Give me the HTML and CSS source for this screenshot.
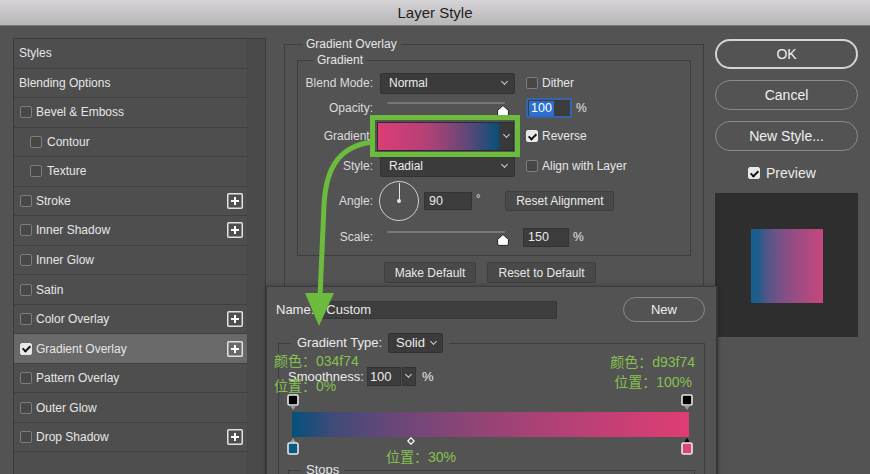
FILE: index.html
```html
<!DOCTYPE html>
<html>
<head>
<meta charset="utf-8">
<link rel="stylesheet" href="styles.css">
</head>
<body>
<div class="window">
  <header class="titlebar">Layer Style</header>
  <div class="main">
    <aside class="styles-list">
      <ul class="rows">
        <li class="row">Styles</li>
        <li class="row">Blending Options</li>
        <li class="row"><span class="cb"></span>Bevel &amp; Emboss</li>
        <li class="row sub"><span class="cb"></span>Contour</li>
        <li class="row sub"><span class="cb"></span>Texture</li>
        <li class="row"><span class="cb"></span>Stroke<svg class="plus" width="16" height="16" viewBox="0 0 16 16"><rect x="0.75" y="0.75" width="14.5" height="14.5" rx="1" fill="none" stroke="#e2e2e2" stroke-width="1.5"/><path d="M8 4v8M4 8h8" stroke="#fff" stroke-width="2"/></svg></li>
        <li class="row"><span class="cb"></span>Inner Shadow<svg class="plus" width="16" height="16" viewBox="0 0 16 16"><rect x="0.75" y="0.75" width="14.5" height="14.5" rx="1" fill="none" stroke="#e2e2e2" stroke-width="1.5"/><path d="M8 4v8M4 8h8" stroke="#fff" stroke-width="2"/></svg></li>
        <li class="row"><span class="cb"></span>Inner Glow</li>
        <li class="row"><span class="cb"></span>Satin</li>
        <li class="row"><span class="cb"></span>Color Overlay<svg class="plus" width="16" height="16" viewBox="0 0 16 16"><rect x="0.75" y="0.75" width="14.5" height="14.5" rx="1" fill="none" stroke="#e2e2e2" stroke-width="1.5"/><path d="M8 4v8M4 8h8" stroke="#fff" stroke-width="2"/></svg></li>
        <li class="row selected"><span class="cb on"></span>Gradient Overlay<svg class="plus" width="16" height="16" viewBox="0 0 16 16"><rect x="0.75" y="0.75" width="14.5" height="14.5" rx="1" fill="none" stroke="#e2e2e2" stroke-width="1.5"/><path d="M8 4v8M4 8h8" stroke="#fff" stroke-width="2"/></svg></li>
        <li class="row"><span class="cb"></span>Pattern Overlay</li>
        <li class="row"><span class="cb"></span>Outer Glow</li>
        <li class="row"><span class="cb"></span>Drop Shadow<svg class="plus" width="16" height="16" viewBox="0 0 16 16"><rect x="0.75" y="0.75" width="14.5" height="14.5" rx="1" fill="none" stroke="#e2e2e2" stroke-width="1.5"/><path d="M8 4v8M4 8h8" stroke="#fff" stroke-width="2"/></svg></li>
      </ul>
      <div class="strip"></div>
    </aside>

    <section class="settings">
      <fieldset class="group outer">
        <legend>Gradient Overlay</legend>
        <fieldset class="group inner">
          <legend>Gradient</legend>
          <div class="form">
            <div class="lbl">Blend Mode:</div>
            <div class="ctl"><div class="select"><span>Normal</span><i class="chev"></i></div><span class="cb gap"></span><span class="cbtext">Dither</span></div>

            <div class="lbl">Opacity:</div>
            <div class="ctl"><div class="slider"><div class="track"></div><svg class="thumb" width="12" height="12" viewBox="0 0 12 12"><path d="M6 0.6 L11.4 5.4 V10 Q11.4 11.4 10 11.4 H2 Q0.6 11.4 0.6 10 V5.4 Z" fill="#fff" stroke="#222" stroke-width="1"/></svg></div><div class="num focus"><span class="sel">100</span></div><span class="unit">%</span></div>

            <div class="lbl">Gradient:</div>
            <div class="ctl"><div class="grad-ctl"><div class="grad-fill"></div><div class="grad-drop"><i class="chev"></i></div></div><span class="cb on gap2"></span><span class="cbtext">Reverse</span></div>

            <div class="lbl">Style:</div>
            <div class="ctl"><div class="select"><span>Radial</span><i class="chev"></i></div><span class="cb gap"></span><span class="cbtext">Align with Layer</span></div>

            <div class="lbl">Angle:</div>
            <div class="ctl"><div class="dial"></div><div class="num angle">90</div><span class="deg">°</span><div class="btn reset-align">Reset Alignment</div></div>

            <div class="lbl">Scale:</div>
            <div class="ctl"><div class="slider"><div class="track"></div><svg class="thumb" width="12" height="12" viewBox="0 0 12 12"><path d="M6 0.6 L11.4 5.4 V10 Q11.4 11.4 10 11.4 H2 Q0.6 11.4 0.6 10 V5.4 Z" fill="#fff" stroke="#222" stroke-width="1"/></svg></div><div class="num scale">150</div><span class="unit">%</span></div>
          </div>
        </fieldset>
        <div class="defaults">
          <div class="btn make-default">Make Default</div>
          <div class="btn reset-default">Reset to Default</div>
        </div>
      </fieldset>
    </section>

    <aside class="actions">
      <div class="pill default">OK</div>
      <div class="pill">Cancel</div>
      <div class="pill">New Style...</div>
      <div class="preview-check"><span class="cb on"></span><span class="ptext">Preview</span></div>
      <div class="preview"><div class="swatch"></div></div>
    </aside>
  </div>

  <div class="editor">
    <div class="name-row">
      <span class="name-lbl">Name:</span>
      <div class="name-input">Custom</div>
      <div class="pill new">New</div>
    </div>
    <fieldset class="group gtype">
      <legend><span class="legend-inner">Gradient Type:<span class="select small"><span>Solid</span><i class="chev"></i></span></span></legend>
      <div class="smooth-row">
        <span>Smoothness:</span>
        <div class="sm-input">100</div>
        <div class="sm-drop"><i class="chev"></i></div>
        <span class="sm-unit">%</span>
      </div>
      <div class="ramp">
        <svg class="stop op-left" width="12" height="17" viewBox="0 0 12 17"><rect x="1" y="1" width="10" height="10" rx="1.5" fill="#000" stroke="#e8e8e8" stroke-width="1.6"/><path d="M3 11.5 H9 L6 16 Z" fill="#9a9a9a"/></svg>
        <svg class="stop op-right" width="12" height="17" viewBox="0 0 12 17"><rect x="1" y="1" width="10" height="10" rx="1.5" fill="#000" stroke="#e8e8e8" stroke-width="1.6"/><path d="M3 11.5 H9 L6 16 Z" fill="#9a9a9a"/></svg>
        <div class="bar"></div>
        <svg class="stop c-left" width="12" height="18" viewBox="0 0 12 18"><path d="M6 1 L9 5.5 H3 Z" fill="#9a9a9a"/><rect x="1" y="6" width="10" height="11" rx="1.5" fill="#0b5a86" stroke="#e8e8e8" stroke-width="1.6"/></svg>
        <svg class="stop c-right" width="12" height="18" viewBox="0 0 12 18"><path d="M6 1 L9 5.5 H3 Z" fill="#000"/><rect x="1" y="6" width="10" height="11" rx="1.5" fill="#d8467a" stroke="#e8e8e8" stroke-width="1.6"/></svg>
        <svg class="mid" width="8" height="8" viewBox="0 0 8 8"><path d="M4 0.8 L7.2 4 L4 7.2 L0.8 4 Z" fill="none" stroke="#fff" stroke-width="1.2"/></svg>
      </div>
      <fieldset class="group stops"><legend>Stops</legend></fieldset>
    </fieldset>
  </div>

  <svg class="annotation" width="870" height="474" viewBox="0 0 870 474">
    <rect x="372.5" y="117.5" width="145" height="37" fill="none" stroke="#6cbb3c" stroke-width="5"/>
    <path d="M372 142 C 342 146, 326 164, 324 205 L 320 297" fill="none" stroke="#6cbb3c" stroke-width="5"/>
    <polygon points="305,293 334,293 319,326" fill="#6cbb3c"/>
  </svg>

  <div class="note n1">颜色：034f74</div>
  <div class="note n2">位置：0%</div>
  <div class="note n3">颜色：d93f74</div>
  <div class="note n4">位置：100%</div>
  <div class="note n5">位置：30%</div>
</div>
</body>
</html>
```

FILE: styles.css
```css
* { box-sizing: border-box; }
html, body { margin: 0; padding: 0; }
body {
  width: 870px;
  height: 474px;
  overflow: hidden;
  background: #535353;
  font-family: "Liberation Sans", Arial, sans-serif;
  font-size: 12px;
  color: #e4e4e4;
}
.window { position: relative; width: 870px; height: 474px; overflow: hidden; }

.titlebar {
  height: 26px;
  border-bottom: 1px solid #7a7a7a;
  background: linear-gradient(#d6d4d6, #b7b5b7);
  color: #1e1e1e;
  font-size: 15px;
  display: flex;
  align-items: center;
  justify-content: center;
}

.main { display: flex; height: 448px; padding-top: 12px; }

/* left list */
.styles-list {
  margin-left: 13px;
  width: 253px;
  flex: none;
  display: flex;
  border: 1px solid #3b3b3b;
  border-bottom: none;
  background: #4b4b4b;
}
.rows { width: 233px; margin: 0; padding: 0; list-style: none; background: #4e4e4e; }
.row {
  height: 29.54px;
  border-bottom: 1px solid #404040;
  display: flex;
  align-items: center;
  padding-left: 5px;
  padding-right: 4px;
  font-size: 12px;
  color: #e6e6e6;
}
.row .cb { margin-left: 1px; margin-right: 4px; }
.row.sub .cb { margin-left: 11px; margin-right: 5px; }
.row.selected { background: #696969; }
.plus { margin-left: auto; display: block; }
.strip { flex: 1; background: #4a4a4a; border-left: 1px solid #474747; }

/* checkboxes */
.cb {
  position: relative;
  display: inline-block;
  width: 12px;
  height: 12px;
  border: 1px solid #7e7e7e;
  border-radius: 2px;
  background: #474747;
  flex: none;
}
.cb.on { background: #e8e8e8; border-color: #e8e8e8; }
.cb.on::after {
  content: "";
  position: absolute;
  left: 3px;
  top: 0.5px;
  width: 3px;
  height: 6px;
  border: solid #111;
  border-width: 0 2px 2px 0;
  transform: rotate(45deg);
}

/* fieldsets */
fieldset.group { border: 1px solid #3e3e3e; margin: 0; padding: 0; min-width: 0; }
fieldset.group > legend { padding: 0 4px; line-height: 14px; font-size: 12px; color: #e6e6e6; }

.settings { width: 449px; flex: none; }
fieldset.outer { margin: -1px 0 0 18px; width: 420px; height: 280px; }
fieldset.outer > legend { margin-left: 17px; }
fieldset.inner { margin: 2px 12px 0; }
fieldset.inner > legend { margin-left: 15px; }

.form {
  display: grid;
  grid-template-columns: 75px 1fr;
  grid-template-rows: 26px 24px 32px 28px 42px 30px;
  column-gap: 7px;
  padding: 3px 0 3px;
}
.lbl { align-self: center; text-align: right; color: #dcdcdc; font-size: 12px; }
.ctl { display: flex; align-items: center; }

.select {
  width: 135px;
  height: 21px;
  background: #3b3b3b;
  border: 1px solid #333;
  border-radius: 2px;
  padding: 0 7px 0 8px;
  display: flex;
  align-items: center;
  justify-content: space-between;
  font-size: 12px;
  color: #ececec;
}
.chev {
  display: block;
  width: 5px;
  height: 5px;
  border-right: 1.5px solid #cfcfcf;
  border-bottom: 1.5px solid #cfcfcf;
  transform: rotate(45deg);
  margin-top: -3px;
}
.cb.gap { margin-left: 11px; }
.cb.gap2 { margin-left: 12px; }
.cbtext { margin-left: 4px; font-size: 12px; color: #e6e6e6; }

.slider { position: relative; width: 135px; height: 18px; }
.track { margin: 3px 0 0 7px; width: 118px; height: 2px; background: #777; border-radius: 1px; }
.thumb { position: absolute; left: 117px; top: 6px; display: block; }

.num {
  width: 46px;
  height: 19px;
  background: #3c3c3c;
  border: 1px solid #333;
  margin-left: 11px;
  padding-left: 4px;
  display: flex;
  align-items: center;
  font-size: 12.5px;
  color: #e8e8e8;
}
.num.focus { border: 2px solid #3466a8; padding-left: 1px; height: 20px; }
.sel { background: #2c6fd1; color: #fff; padding: 0 2px; line-height: 15px; }
.num.scale { margin-left: 8px; }
.unit { margin-left: 4px; font-size: 12px; }

.grad-ctl { margin-left: -3px; width: 137px; height: 29px; display: flex; border: 1px solid #2c2c2c; }
.grad-fill { flex: 1; background: linear-gradient(90deg, #dc3d75 0%, 68%, #04507a 100%); }
.grad-drop { width: 14px; background: #393939; display: flex; align-items: center; justify-content: center; }

.dial {
  position: relative;
  width: 40px;
  height: 40px;
  margin-left: -1px;
  border: 1px solid #cfcfcf;
  border-radius: 50%;
}
.dial::before {
  content: "";
  position: absolute;
  left: 18.5px;
  top: 1px;
  width: 1px;
  height: 18px;
  background: #e6e6e6;
}
.dial::after {
  content: "";
  position: absolute;
  left: 17px;
  top: 17px;
  width: 4px;
  height: 4px;
  border-radius: 50%;
  background: #e6e6e6;
}
.num.angle { margin-left: 5px; width: 48px; height: 18px; }
.deg { margin-left: 4px; font-size: 11px; margin-top: -6px; }

.btn {
  height: 20px;
  background: #494949;
  border: 1px solid #3e3e3e;
  border-radius: 2px;
  display: flex;
  align-items: center;
  justify-content: center;
  font-size: 12px;
  color: #e8e8e8;
}
.reset-align { width: 109px; margin-left: 25px; }
.defaults { display: flex; gap: 11px; padding: 6px 0 0 99px; }
.make-default { width: 92px; height: 21px; }
.reset-default { width: 109px; height: 21px; }

/* right column */
.actions { width: 143px; flex: none; display: flex; flex-direction: column; margin-left: 0; }
.pill {
  height: 30px;
  border: 1.5px solid #8a8a8a;
  border-radius: 15px;
  display: flex;
  align-items: center;
  justify-content: center;
  font-size: 14px;
  color: #efefef;
  margin-top: 11px;
}
.pill.default { border: 2px solid #d4d4d4; margin-top: 1px; }
.preview-check { height: 20px; margin-top: 12px; display: flex; align-items: center; padding-left: 33px; }
.ptext { margin-left: 6px; font-size: 14px; color: #ececec; }
.preview { margin-top: 10px; height: 144px; background: #2e2e2e; padding: 36px 0 0 36px; }
.swatch {
  width: 72px;
  height: 74px;
  background: linear-gradient(90deg, #16608f 0%, #1e5d8c 10%, 38%, #c8467f 100%);
}

/* gradient editor popup */
.editor {
  position: absolute;
  left: 266px;
  top: 286px;
  width: 452px;
  height: 200px;
  background: #535353;
  border: 1px solid #3c3c3c;
  border-right: 2px solid #363636;
  box-shadow: 0 0 4px rgba(0,0,0,0.35);
  overflow: hidden;
}
.name-row { display: flex; align-items: center; height: 25px; margin-top: 10px; padding: 0 11px 0 9px; font-size: 13px; }
.name-lbl { color: #ececec; }
.name-input {
  margin-left: 4px;
  width: 239px;
  height: 18px;
  background: #3e3e3e;
  border: 1px solid #373737;
  padding-left: 7px;
  display: flex;
  align-items: center;
  color: #e8e8e8;
}
.pill.new { margin: 0 0 0 auto; width: 82px; height: 25px; font-size: 13px; border-radius: 13px; }

fieldset.gtype { margin: 11px 0 0 11px; width: 427px; height: 160px; }
fieldset.gtype > legend { margin-left: 12px; padding: 0 6px; line-height: 20px; }
.legend-inner { display: inline-flex; align-items: center; font-size: 13px; color: #ececec; }
.select.small { width: 55px; height: 20px; margin-left: 6px; font-size: 13px; padding: 0 6px 0 7px; }

.smooth-row { display: flex; align-items: center; height: 18px; margin-top: 14px; padding-left: 9px; font-size: 13px; color: #ececec; }
.sm-input { margin-left: 3px; width: 34px; height: 19px; background: #3c3c3c; border: 1px solid #333; padding-left: 2px; display: flex; align-items: center; }
.sm-drop { margin-left: 1px; width: 14px; height: 19px; background: #3c3c3c; border: 1px solid #333; display: flex; align-items: center; justify-content: center; }
.sm-unit { margin-left: 6px; }

.ramp { position: relative; margin: 9px 0 0 13px; width: 397px; height: 61px; padding-top: 18px; }
.bar { height: 25px; background: linear-gradient(90deg, #04507b 0%, 30%, #df3d74 100%); }
.stop { position: absolute; display: block; }
.op-left { left: -5px; top: 0; }
.op-right { left: 389px; top: 0; }
.c-left { left: -5px; top: 43px; }
.c-right { left: 389px; top: 43px; }
.mid { position: absolute; left: 115px; top: 43px; display: block; }

fieldset.stops { margin: 8px 0 0 9px; width: 407px; height: 30px; }
fieldset.stops > legend { margin-left: 12px; padding: 0 5px; font-size: 13px; }

/* annotations */
.annotation { position: absolute; left: 0; top: 0; pointer-events: none; }
.note {
  position: absolute;
  color: #86c14f;
  font-family: "Liberation Sans", "Noto Sans CJK SC", sans-serif;
  font-size: 14px;
  line-height: 16px;
  white-space: nowrap;
}
.n1 { left: 274px; top: 353px; }
.n2 { left: 274px; top: 378px; }
.n3 { right: 175px; top: 354px; }
.n4 { right: 178px; top: 374px; }
.n5 { left: 386px; top: 449px; }
```
